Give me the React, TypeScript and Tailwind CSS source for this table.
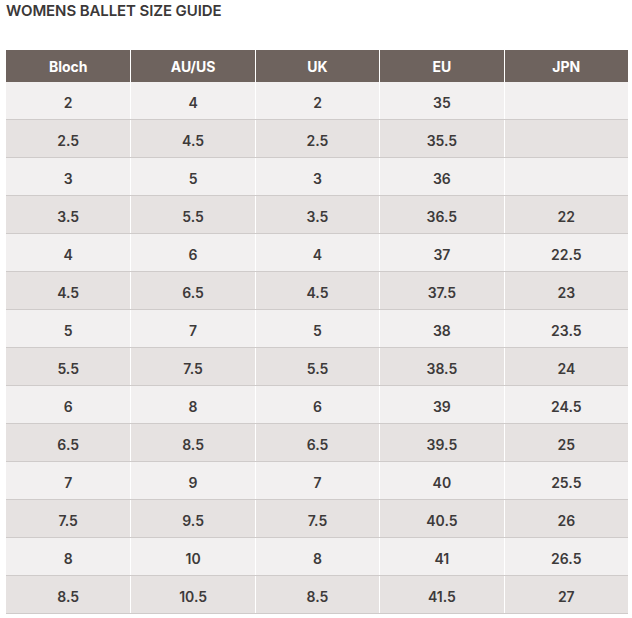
import React from 'react'

const headers = ['Bloch', 'AU/US', 'UK', 'EU', 'JPN']

const rows: string[][] = [
  ['2', '4', '2', '35', ''],
  ['2.5', '4.5', '2.5', '35.5', ''],
  ['3', '5', '3', '36', ''],
  ['3.5', '5.5', '3.5', '36.5', '22'],
  ['4', '6', '4', '37', '22.5'],
  ['4.5', '6.5', '4.5', '37.5', '23'],
  ['5', '7', '5', '38', '23.5'],
  ['5.5', '7.5', '5.5', '38.5', '24'],
  ['6', '8', '6', '39', '24.5'],
  ['6.5', '8.5', '6.5', '39.5', '25'],
  ['7', '9', '7', '40', '25.5'],
  ['7.5', '9.5', '7.5', '40.5', '26'],
  ['8', '10', '8', '41', '26.5'],
  ['8.5', '10.5', '8.5', '41.5', '27'],
]

export default function App() {
  return (
    <div className="w-[632px] h-[618px] bg-white px-[6px] pt-[2px] font-['Inter',sans-serif]">
      <h1 className="text-[15px] leading-[18px] font-semibold text-[#3b3838] tracking-[-0.1px]">
        WOMENS BALLET SIZE GUIDE
      </h1>

      <div className="mt-[30px] w-[622px]">
        <div className="grid grid-cols-5 h-[32px] bg-[#6e635e]">
          {headers.map((h, i) => (
            <div
              key={h}
              className={`flex items-center justify-center text-[14px] font-bold text-white ${
                i > 0 ? 'border-l border-white' : ''
              }`}
            >
              {h}
            </div>
          ))}
        </div>

        {rows.map((row, r) => (
          <div
            key={r}
            className={`grid grid-cols-5 h-[38px] border-b border-[#cfcbca] ${
              r % 2 === 0 ? 'bg-[#f2f0f0]' : 'bg-[#e6e2e1]'
            }`}
          >
            {row.map((cell, i) => (
              <div
                key={i}
                className={`flex items-center justify-center pt-[3px] text-[14px] font-semibold text-[#3d3a3a] ${
                  i > 0 ? 'border-l border-white' : ''
                }`}
              >
                {cell}
              </div>
            ))}
          </div>
        ))}
      </div>
    </div>
  )
}
